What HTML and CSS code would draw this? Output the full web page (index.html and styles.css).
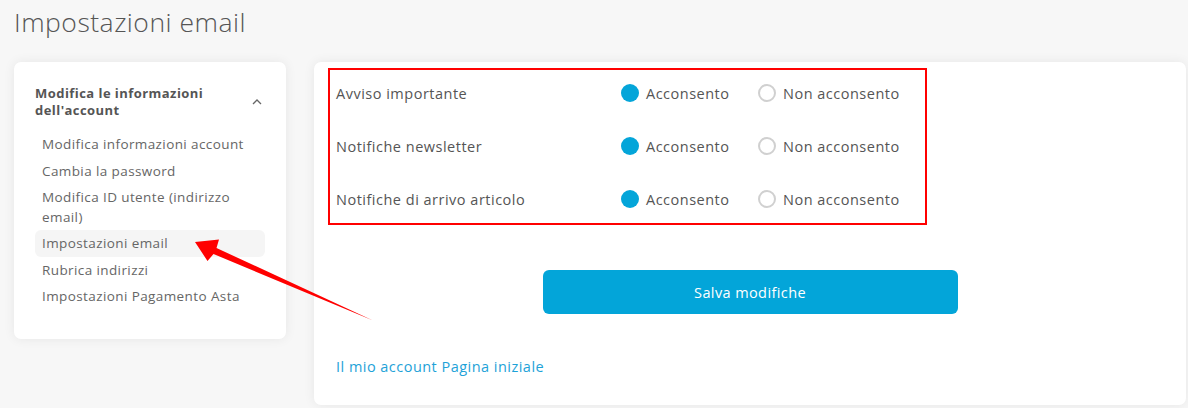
FILE: index.html
```html
<!DOCTYPE html>
<html lang="it">
<head>
<meta charset="utf-8">
<title>Impostazioni email</title>
<link rel="stylesheet" href="styles.css">
</head>
<body>
<div class="page">
  <h1 class="page-title">Impostazioni email</h1>
  <div class="layout">
    <aside class="side-card">
      <div class="side-head">
        <span class="side-head-title">Modifica le informazioni dell'account</span>
        <svg class="chev" width="10" height="6" viewBox="0 0 10 6"><path d="M1 5 L5 1 L9 5" fill="none" stroke="#666" stroke-width="1.3"/></svg>
      </div>
      <ul class="side-links">
        <li><a>Modifica informazioni account</a></li>
        <li><a>Cambia la password</a></li>
        <li><a>Modifica ID utente (indirizzo email)</a></li>
        <li class="active"><a>Impostazioni email</a></li>
        <li><a>Rubrica indirizzi</a></li>
        <li><a>Impostazioni Pagamento Asta</a></li>
      </ul>
    </aside>
    <main class="main-card">
      <div class="form-box">
        <div class="form-row">
          <span class="row-label">Avviso importante</span>
          <span class="opt"><span class="radio on"></span>Acconsento</span>
          <span class="opt"><span class="radio"></span>Non acconsento</span>
        </div>
        <div class="form-row">
          <span class="row-label">Notifiche newsletter</span>
          <span class="opt"><span class="radio on"></span>Acconsento</span>
          <span class="opt"><span class="radio"></span>Non acconsento</span>
        </div>
        <div class="form-row">
          <span class="row-label">Notifiche di arrivo articolo</span>
          <span class="opt"><span class="radio on"></span>Acconsento</span>
          <span class="opt"><span class="radio"></span>Non acconsento</span>
        </div>
      </div>
      <div class="btn-wrap"><button class="save-btn">Salva modifiche</button></div>
      <div class="crumbs"><a>Il mio account</a> <a>Pagina iniziale</a></div>
    </main>
  </div>
  <svg class="arrow" width="1188" height="408" viewBox="0 0 1188 408">
    <polygon points="195,242 219,239.5 216.5,248 373,320.5 213.5,254 207.5,261" fill="#ff0000"/>
  </svg>
</div>
</body>
</html>
```
FILE: styles.css
```css
html, body {
  margin: 0;
  padding: 0;
}
body {
  background: #f7f7f7;
  font-family: "Open Sans", "DejaVu Sans", sans-serif;
  color: #555;
  width: 1188px;
  height: 408px;
  overflow: hidden;
}
.page {
  position: relative;
  padding: 0 2px 0 14px;
}
.page-title {
  margin: 0;
  height: 62px;
  font-size: 26.5px;
  font-weight: 300;
  line-height: 44px;
  color: #555;
  letter-spacing: 0.5px;
}
.layout {
  display: flex;
  gap: 28px;
  align-items: flex-start;
}
.side-card {
  width: 272px;
  box-sizing: border-box;
  background: #fff;
  border-radius: 7px;
  box-shadow: 0 0 12px rgba(0,0,0,0.07);
  padding: 23px 21px 30px;
}
.side-head {
  display: flex;
  align-items: center;
  justify-content: space-between;
  padding-right: 3px;
}
.side-head-title {
  width: 205px;
  font-size: 13px;
  font-weight: 700;
  line-height: 16.5px;
  letter-spacing: 0.45px;
  color: #555;
}
.chev {
  display: block;
}
.side-links {
  list-style: none;
  margin: 13px 0 0;
  padding: 0;
}
.side-links li {
  padding: 3.2px 7px;
  font-size: 13.5px;
  line-height: 20px;
  letter-spacing: 0.4px;
  border-radius: 6px;
  color: #666;
}
.side-links li.active {
  background: #f5f5f5;
}
.main-card {
  flex: 1;
  height: 343px;
  box-sizing: border-box;
  background: #fff;
  border-radius: 7px;
  box-shadow: 0 0 12px rgba(0,0,0,0.07);
  padding: 6px 14px;
}
.form-box {
  width: 599px;
  box-sizing: border-box;
  border: 2px solid #ff0000;
  padding: 12px 6px 13px;
  display: flex;
  flex-direction: column;
  gap: 31px;
}
.form-row {
  display: flex;
  align-items: center;
  height: 22px;
  font-size: 14.5px;
  letter-spacing: 0.5px;
  color: #555;
  white-space: nowrap;
}
.row-label {
  width: 285px;
  flex: none;
}
.opt {
  display: flex;
  align-items: center;
  gap: 7px;
  width: 137px;
  flex: none;
}
.opt:last-child {
  width: auto;
}
.radio {
  width: 18px;
  height: 18px;
  box-sizing: border-box;
  border-radius: 50%;
  border: 2px solid #d0d0d0;
  flex: none;
}
.radio.on {
  border: none;
  background: #04a5d9;
}
.btn-wrap {
  display: flex;
  justify-content: center;
  margin-top: 45px;
}
.save-btn {
  width: 415px;
  height: 44px;
  border: none;
  border-radius: 6px;
  background: #03a5d9;
  color: #fff;
  font-family: inherit;
  font-size: 14.5px;
  letter-spacing: 0.4px;
}
.crumbs {
  margin-top: 42px;
  padding-left: 8px;
  font-size: 14.5px;
  line-height: 22px;
  letter-spacing: 0.47px;
  color: #1ea2d8;
}
.crumbs a {
  color: #1ea2d8;
}
.arrow {
  position: absolute;
  left: 0;
  top: 0;
  pointer-events: none;
}
```
